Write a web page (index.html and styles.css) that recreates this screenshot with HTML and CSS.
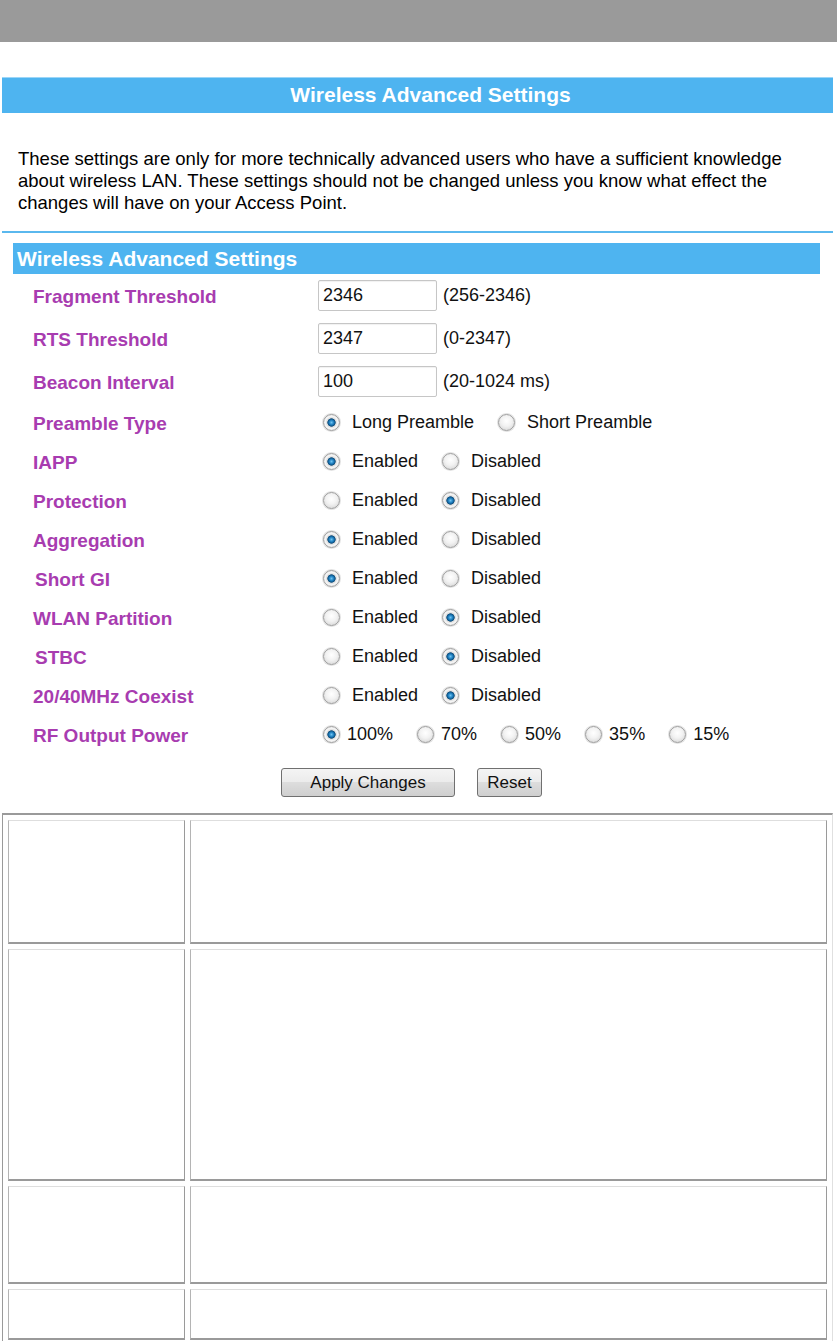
FILE: index.html
```html
<!DOCTYPE html>
<html lang="en">

<head>
    <meta charset="UTF-8">
    <meta name="viewport" content="width=device-width, initial-scale=1.0">
    <title>Wireless Advanced Settings</title>
    <link rel="stylesheet" href="styles.css">
</head>

<body>
    <div class="topbar"></div>

    <div class="page-title">Wireless Advanced Settings</div>

    <p class="intro">These settings are only for more technically advanced users who have a sufficient knowledge<br>about wireless LAN. These settings should not be changed unless you know what effect the<br>changes will have on your Access Point.</p>

    <hr class="blue-line">

    <form class="settings">
        <div class="section-head">Wireless Advanced Settings</div>

        <!-- text fields -->
        <div class="row row-text">
            <span class="label">Fragment Threshold</span>
            <div class="ctrl"><input class="num" type="text" value="2346"><span class="range">(256-2346)</span></div>
        </div>
        <div class="row row-text">
            <span class="label">RTS Threshold</span>
            <div class="ctrl"><input class="num" type="text" value="2347"><span class="range">(0-2347)</span></div>
        </div>
        <div class="row row-text">
            <span class="label">Beacon Interval</span>
            <div class="ctrl"><input class="num" type="text" value="100"><span class="range">(20-1024 ms)</span></div>
        </div>

        <!-- radio groups -->
        <div class="row">
            <span class="label">Preamble Type</span>
            <div class="ctrl">
                <label class="opt"><input type="radio" name="preamble" checked>Long Preamble</label>
                <label class="opt"><input type="radio" name="preamble">Short Preamble</label>
            </div>
        </div>
        <div class="row">
            <span class="label">IAPP</span>
            <div class="ctrl">
                <label class="opt"><input type="radio" name="iapp" checked>Enabled</label>
                <label class="opt"><input type="radio" name="iapp">Disabled</label>
            </div>
        </div>
        <div class="row">
            <span class="label">Protection</span>
            <div class="ctrl">
                <label class="opt"><input type="radio" name="protection">Enabled</label>
                <label class="opt"><input type="radio" name="protection" checked>Disabled</label>
            </div>
        </div>
        <div class="row">
            <span class="label">Aggregation</span>
            <div class="ctrl">
                <label class="opt"><input type="radio" name="aggregation" checked>Enabled</label>
                <label class="opt"><input type="radio" name="aggregation">Disabled</label>
            </div>
        </div>
        <div class="row">
            <span class="label indent">Short GI</span>
            <div class="ctrl">
                <label class="opt"><input type="radio" name="shortgi" checked>Enabled</label>
                <label class="opt"><input type="radio" name="shortgi">Disabled</label>
            </div>
        </div>
        <div class="row">
            <span class="label">WLAN Partition</span>
            <div class="ctrl">
                <label class="opt"><input type="radio" name="partition">Enabled</label>
                <label class="opt"><input type="radio" name="partition" checked>Disabled</label>
            </div>
        </div>
        <div class="row">
            <span class="label indent">STBC</span>
            <div class="ctrl">
                <label class="opt"><input type="radio" name="stbc">Enabled</label>
                <label class="opt"><input type="radio" name="stbc" checked>Disabled</label>
            </div>
        </div>
        <div class="row">
            <span class="label">20/40MHz Coexist</span>
            <div class="ctrl">
                <label class="opt"><input type="radio" name="coexist">Enabled</label>
                <label class="opt"><input type="radio" name="coexist" checked>Disabled</label>
            </div>
        </div>
        <div class="row">
            <span class="label">RF Output Power</span>
            <div class="ctrl power">
                <label class="opt"><input type="radio" name="power" checked>100%</label>
                <label class="opt"><input type="radio" name="power">70%</label>
                <label class="opt"><input type="radio" name="power">50%</label>
                <label class="opt"><input type="radio" name="power">35%</label>
                <label class="opt"><input type="radio" name="power">15%</label>
            </div>
        </div>

        <div class="buttons">
            <button type="button" class="btn btn-apply">Apply Changes</button>
            <button type="reset" class="btn btn-reset">Reset</button>
        </div>
    </form>

    <!-- help table, cells left empty -->
    <table class="help">
        <tr class="r1"><td class="c1"></td><td></td></tr>
        <tr class="r2"><td class="c1"></td><td></td></tr>
        <tr class="r3"><td class="c1"></td><td></td></tr>
        <tr class="r4"><td class="c1"></td><td></td></tr>
    </table>
</body>

</html>
```

FILE: styles.css
```css
body {
    margin: 0;
    font-family: "Liberation Sans", Arial, sans-serif;
    color: #111111;
    background-color: #FFFFFF;
}

.topbar {
    height: 42px;
    background-color: #9A9A9A; /* сіра смуга зверху */
}

.page-title {
    box-sizing: border-box;
    margin: 35px 4px 0 2px;
    height: 36px;
    line-height: 34px;
    padding-left: 26px;
    background-color: #4EB4F0;
    border-top: 1px solid #9CD6F8;
    color: #FFFFFF;
    font-size: 21px;
    font-weight: bold;
    text-align: center;
}

.intro {
    margin: 35px 0 0 18px;
    font-size: 18.5px;
    line-height: 22px;
    color: #000000;
}

.blue-line {
    margin: 17px 4px 0 2px;
    height: 2px;
    border: none;
    background-color: #5AB8EE;
}

.settings {
    margin-top: 10px;
}

.section-head {
    margin: 0 17px 0 13px;
    height: 31px;
    line-height: 31px;
    padding-left: 4px;
    background-color: #4EB4F0;
    color: #FFFFFF;
    font-size: 21px;
    font-weight: bold;
}

.row {
    display: grid;
    grid-template-columns: 285px auto;
    align-items: center;
    height: 39px;
    padding-left: 33px;
}

.row-text {
    height: 43px;
}

.label {
    position: relative;
    top: 1px;
    color: #A83CB0; /* фіолетові підписи */
    font-size: 19px;
    font-weight: bold;
}

.label.indent {
    padding-left: 2px;
}

.ctrl {
    display: flex;
    align-items: center;
    font-size: 18px;
}

.num {
    box-sizing: border-box;
    width: 119px;
    height: 31px;
    margin: 0;
    padding: 0 4px;
    border: 1px solid #C6C6C6;
    border-radius: 2px;
    box-shadow: inset 0 1px 1px rgba(0, 0, 0, 0.06);
    font-family: "Liberation Sans", Arial, sans-serif;
    font-size: 18px;
    color: #111111;
}

.range {
    margin-left: 6px;
}

.opt {
    display: inline-flex;
    align-items: center;
}

.ctrl .opt:first-child {
    margin-left: 5px;
}

.opt + .opt {
    margin-left: 24px;
}

.opt input[type="radio"] {
    -webkit-appearance: none;
    appearance: none;
    box-sizing: border-box;
    width: 17px;
    height: 17px;
    margin: 0 12px 0 0;
    border: 1px solid #9D9D9D;
    border-radius: 50%;
    background: radial-gradient(circle at 50% 40%, #FFFFFF 0, #F2F2F2 45%, #CFCFCF 100%);
    box-shadow: 0 0 0 1px #E2E2E2;
}

.opt input[type="radio"]:checked {
    background: radial-gradient(circle at 50% 50%, #6FC4F2 0, #1C7DBE 22%, #0E4C7A 36%, #DADADA 42%, #F6F6F6 58%, #D2D2D2 100%);
}

.power .opt input[type="radio"] {
    margin-right: 7px;
}

.buttons {
    display: flex;
    justify-content: center;
    gap: 22px;
    margin-top: 14px;
    padding-right: 14px;
}

.btn {
    box-sizing: border-box;
    height: 29px;
    padding: 0;
    border: 1px solid #707070;
    border-radius: 3px;
    background: linear-gradient(#F4F4F4, #EBEBEB 50%, #DDDDDD 50%, #CFCFCF);
    font-family: "Liberation Sans", Arial, sans-serif;
    font-size: 17px;
    color: #111111;
}

.btn-apply {
    width: 174px;
}

.btn-reset {
    width: 65px;
}

.help {
    box-sizing: border-box;
    width: 831px;
    margin: 16px 0 0 2px;
    border-collapse: separate;
    border-spacing: 5px;
    border-style: solid;
    border-width: 2px 1px 2px 1px;
    border-color: #9A9A9A #E0E0E0 #E0E0E0 #9A9A9A;
}

.help td {
    padding: 0;
    border-style: solid;
    border-width: 1px 1px 2px 1px;
    border-color: #DEDEDE #9A9A9A #9A9A9A #B4B4B4;
}

.help .c1 {
    width: 177px;
    box-sizing: border-box;
}

.help .r1 td {
    height: 121px;
}

.help .r2 td {
    height: 229px;
}

.help .r3 td {
    height: 95px;
}

.help .r4 td {
    height: 48px;
}
```
